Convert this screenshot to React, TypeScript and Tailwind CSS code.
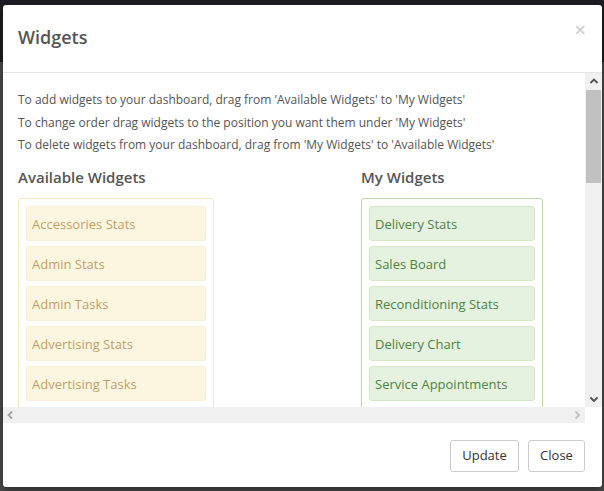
import React from "react";

const available = [
  "Accessories Stats",
  "Admin Stats",
  "Admin Tasks",
  "Advertising Stats",
  "Advertising Tasks",
];
const mine = [
  "Delivery Stats",
  "Sales Board",
  "Reconditioning Stats",
  "Delivery Chart",
  "Service Appointments",
];

function Chevron({ dir, color }: { dir: "up" | "down" | "left" | "right"; color: string }) {
  const d =
    dir === "up"
      ? "M1.5 6 L5 2.5 L8.5 6"
      : dir === "down"
      ? "M1.5 3.5 L5 7 L8.5 3.5"
      : dir === "left"
      ? "M6 1.5 L2.5 5 L6 8.5"
      : "M3.5 1.5 L7 5 L3.5 8.5";
  return (
    <svg width="10" height="10" viewBox="0 0 10 10">
      <path d={d} fill="none" stroke={color} strokeWidth="1.8" />
    </svg>
  );
}

export default function App() {
  return (
    <div
      className="w-[604px] h-[491px] overflow-hidden bg-[#4d4d4d] pt-[5px] pl-[3px]"
      style={{ fontFamily: "'Open Sans', 'Noto Sans', sans-serif" }}
    >
      <div className="absolute left-0 top-0 w-[604px] h-[62px] bg-[#1d1d23]" />
      <div className="relative w-[599px] h-[482px] bg-white rounded-[3px] flex flex-col shadow-[0_3px_9px_rgba(0,0,0,0.5)]">
        {/* header */}
        <div className="h-[68px] border-b border-[#e5e5e5] flex items-center justify-between pl-[15px] pr-[16px]">
          <h4 className="text-[18px] font-semibold text-[#555] leading-none mb-[3px]">Widgets</h4>
          <span className="text-[#c8c8c8] text-[20px] leading-none self-start mt-[15px]">×</span>
        </div>
        {/* body */}
        <div className="h-[350px] flex flex-col">
          <div className="flex h-[334px]">
            <div className="w-[582px] h-[334px] overflow-hidden px-[15px] pt-[16px] text-[#555]">
              <div className="text-[12px] leading-[22.5px] whitespace-nowrap">
                <p>To add widgets to your dashboard, drag from 'Available Widgets' to 'My Widgets'</p>
                <p>To change order drag widgets to the position you want them under 'My Widgets'</p>
                <p>To delete widgets from your dashboard, drag from 'My Widgets' to 'Available Widgets'</p>
              </div>
              <div className="flex mt-[10px]">
                <div className="w-[343px]">
                  <h4 className="text-[15px] font-semibold leading-[20px] text-[#555]">Available Widgets</h4>
                  <div className="mt-[11px] w-[196px] border border-[#f4e8c8] rounded-[3px] pt-[7px] px-[7px] pb-[20px] flex flex-col gap-[5px]">
                    {available.map((w) => (
                      <div
                        key={w}
                        className="h-[35px] bg-[#fcf6e1] border border-[#f8efd6] rounded-[3px] px-[5px] pt-[3px] flex items-center text-[13px] text-[#c2a166]"
                      >
                        {w}
                      </div>
                    ))}
                  </div>
                </div>
                <div>
                  <h4 className="text-[15px] font-semibold leading-[20px] text-[#555]">My Widgets</h4>
                  <div className="mt-[11px] w-[182px] border border-[#bcd5ac] rounded-[3px] pt-[7px] px-[7px] pb-[20px] flex flex-col gap-[5px]">
                    {mine.map((w) => (
                      <div
                        key={w}
                        className="h-[35px] bg-[#e6f2e0] border border-[#d3e6c8] rounded-[3px] px-[5px] pt-[3px] flex items-center text-[13px] text-[#4f8342]"
                      >
                        {w}
                      </div>
                    ))}
                  </div>
                </div>
              </div>
            </div>
            {/* vertical scrollbar */}
            <div className="w-[17px] h-[334px] bg-[#f1f1f1] flex flex-col">
              <div className="h-[17px] flex items-center justify-center">
                <Chevron dir="up" color="#505050" />
              </div>
              <div className="h-[93px] mx-[1px] bg-[#c1c1c1]" />
              <div className="flex-1" />
              <div className="h-[17px] flex items-center justify-center">
                <Chevron dir="down" color="#505050" />
              </div>
            </div>
          </div>
          {/* horizontal scrollbar */}
          <div className="h-[16px] w-[582px] bg-[#f0f0f0] flex items-center justify-between px-[3px]">
            <Chevron dir="left" color="#a3a3a3" />
            <Chevron dir="right" color="#c0c0c0" />
          </div>
        </div>
        {/* footer */}
        <div className="flex-1 flex items-center justify-end gap-[9px] pr-[17px] pt-[2px]">
          <button className="h-[32px] w-[69px] border border-[#ccc] rounded-[3px] text-[13px] text-[#333] bg-white">
            Update
          </button>
          <button className="h-[32px] w-[57px] border border-[#ccc] rounded-[3px] text-[13px] text-[#333] bg-white">
            Close
          </button>
        </div>
      </div>
    </div>
  );
}
